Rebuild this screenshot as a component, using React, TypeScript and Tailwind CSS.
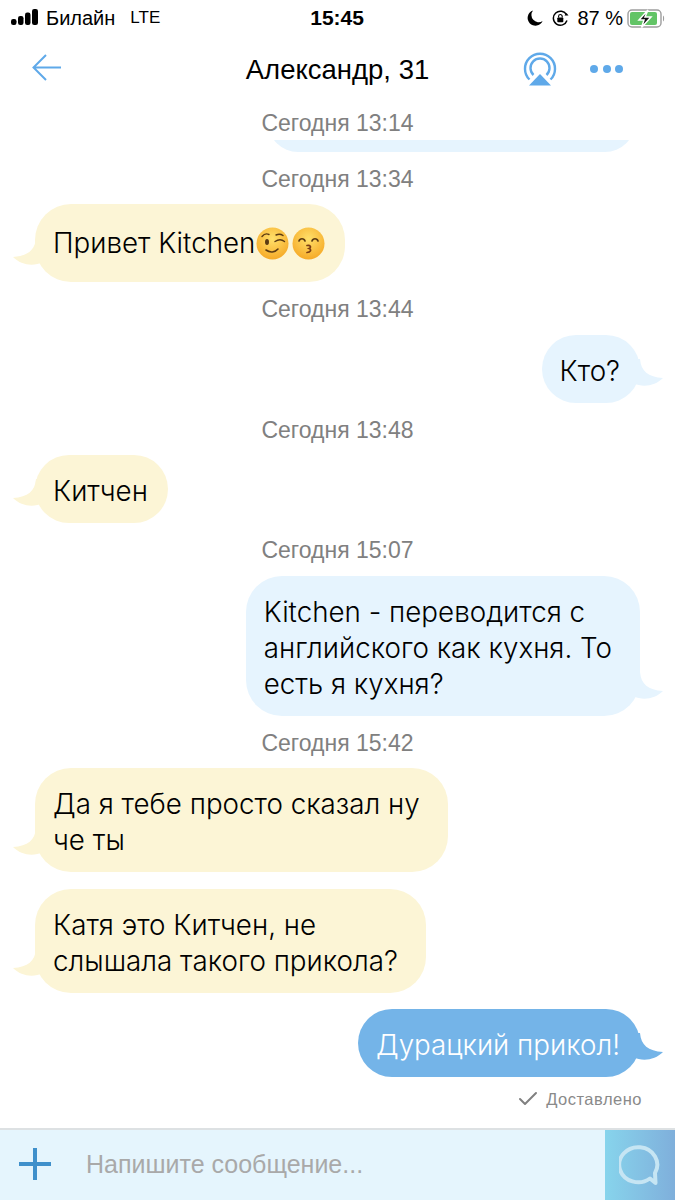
import type { ReactNode } from "react";
import { Check } from "lucide-react";

const stack = "font-['Liberation_Sans',Arial,sans-serif]";

function StatusBar() {
  return (
    <div className="flex h-[36px] items-center pl-[11px] pr-[9px] text-[20px] text-black">
      <svg width="28" height="18" viewBox="0 0 28 18" className="mt-[-2px]">
        <rect x="0" y="11" width="5.5" height="6" rx="2.2" fill="#000" />
        <rect x="7" y="8" width="5.5" height="9" rx="2.2" fill="#000" />
        <rect x="14" y="4.5" width="5.5" height="12.5" rx="2.2" fill="#000" />
        <rect x="21" y="1" width="6" height="16" rx="2.2" fill="#000" />
      </svg>
      <span className="ml-[7px]">Билайн</span>
      <span className="ml-[15px] text-[17px]">LTE</span>
      <span className="ml-[150px] w-[56px] text-[21px] font-bold">15:45</span>
      <div className="ml-auto flex items-center">
        <svg width="16" height="16" viewBox="0 0 16 16">
          <path d="M6 0.5A7.8 7.8 0 1 0 15.6 11 7.2 7.2 0 0 1 6 0.5Z" fill="#000" />
        </svg>
        <svg width="17" height="17" viewBox="0 0 17 17" className="ml-[9px]" fill="none">
          <path d="M15 10.5A7 7 0 1 1 14.6 5" stroke="#000" strokeWidth="1.5" />
          <path d="M12.5 5.5h4l-2-2.6Z" fill="#000" />
          <rect x="5.3" y="7.5" width="6" height="4.8" rx="0.8" fill="#000" />
          <path d="M6.6 7.5V6.3a1.8 1.8 0 0 1 3.6 0v1.2" stroke="#000" strokeWidth="1.1" />
        </svg>
        <span className="ml-[8px] text-[20px]">87 %</span>
        <svg width="39" height="19" viewBox="0 0 39 19" className="ml-[4px]" fill="none">
          <rect x="1" y="1" width="33" height="17" rx="4" stroke="#9d9d9d" strokeWidth="1.4" />
          <rect x="3" y="3" width="27" height="13" rx="2" fill="#62C466" />
          <path d="M36 6.5c1.5.5 1.5 5.5 0 6Z" fill="#9d9d9d" />
          <path d="M21 1 12 11h5l-2.500 7.500L24 8h-6Z" fill="#111" stroke="#fff" strokeWidth="1.500" />
        </svg>
      </div>
    </div>
  );
}

function NavBar() {
  return (
    <div className="relative flex h-[68px] shrink-0 items-center justify-center">
      <svg width="30" height="27" viewBox="0 0 30 27" fill="none" className="absolute left-[32px] top-[18px]">
        <path d="M14 1 1.5 13.5 14 26M2 13.5h27" stroke="#5FA9E9" strokeWidth="2" />
      </svg>
      <span className="text-[27.500px] leading-none text-black">Александр, 31</span>
      <svg width="34" height="34" viewBox="0 0 34 34" fill="none" className="absolute left-[523px] top-[16px]">
        <path d="M6.5 27.5a15 15 0 1 1 21 0" stroke="#5FA9E9" strokeWidth="2.4" />
        <path d="M10.5 23a9.5 9.5 0 1 1 13 0" stroke="#5FA9E9" strokeWidth="2.4" />
        <path d="M17 22 28 33.5H6Z" fill="#5FA9E9" />
      </svg>
      <div className="absolute left-[590px] top-[29px] flex gap-[4.5px]">
        <span className="h-[8px] w-[8px] rounded-full bg-[#5FA9E9]" />
        <span className="h-[8px] w-[8px] rounded-full bg-[#5FA9E9]" />
        <span className="h-[8px] w-[8px] rounded-full bg-[#5FA9E9]" />
      </div>
    </div>
  );
}

function Stamp({ children, className }: { children: ReactNode; className?: string }) {
  return (
    <div className={`h-[24px] text-center text-[23px] leading-[24px] text-[#808080] ${className ?? "mb-[14px] mt-[15px]"}`}>
      {children}
    </div>
  );
}

function Tail({ side, color }: { side: "left" | "right"; color: string }) {
  if (side === "left") {
    return (
      <svg width="30" height="30" viewBox="0 0 30 30" className="absolute bottom-[14px] left-[-22px]">
        <path d="M23 0C22 12 15 18 0 19 8 27 20 29 30 24L30 0Z" fill={color} />
      </svg>
    );
  }
  return (
    <svg width="30" height="30" viewBox="0 0 30 30" className="absolute bottom-[14px] right-[-23px]">
      <path d="M7 0C8 12 15 18 30 19 22 27 10 29 0 24L0 0Z" fill={color} />
    </svg>
  );
}

function Bubble({
  side,
  dark,
  wrapped,
  children,
}: {
  side: "left" | "right";
  dark?: boolean;
  wrapped?: boolean; // wrapped messages keep a wider gap on the right
  children: ReactNode;
}) {
  const left = side === "left";
  const color = left ? "#FCF5D6" : dark ? "#74B4E8" : "#E6F4FE";
  return (
    <div className={`flex ${left ? "justify-start pl-[35px]" : "justify-end pr-[35px]"}`}>
      <div
        className={`relative rounded-[36px] pb-[14px] pl-[18px] pt-[18px] font-['Inter',sans-serif] text-[27.750px] font-light leading-[36px] ${
          wrapped ? "pr-[28px]" : "pr-[20px]"
        } ${left ? "bg-[#FCF5D6] text-black" : dark ? "bg-[#74B4E8] text-white" : "bg-[#E6F4FE] text-black"}`}
      >
        <Tail side={side} color={color} />
        <span className="relative">{children}</span>
      </div>
    </div>
  );
}

function WinkEmoji() {
  return (
    <svg width="33" height="33" viewBox="0 0 33 33" fill="none">
      <defs>
        <radialGradient id="wink" cx="50%" cy="35%" r="70%">
          <stop offset="0%" stopColor="#FFE06A" />
          <stop offset="100%" stopColor="#F5A623" />
        </radialGradient>
      </defs>
      <circle cx="16.5" cy="16.5" r="16" fill="url(#wink)" />
      <ellipse cx="11" cy="15" rx="2" ry="3" fill="#5b3a12" />
      <path d="M6 9.5c2-2.4 5-3 7-2M19 14.5c3-2 7-2 9.5 0M20 8c2.500-1.200 5-1 7 .5" stroke="#5b3a12" strokeWidth="1.4" strokeLinecap="round" />
      <path d="M10 23c4 3 9 2.500 12-1" stroke="#5b3a12" strokeWidth="1.6" strokeLinecap="round" />
    </svg>
  );
}

function KissEmoji() {
  return (
    <svg width="33" height="33" viewBox="0 0 33 33" fill="none">
      <defs>
        <radialGradient id="kiss" cx="50%" cy="35%" r="70%">
          <stop offset="0%" stopColor="#FFE06A" />
          <stop offset="100%" stopColor="#F5A623" />
        </radialGradient>
      </defs>
      <circle cx="16.5" cy="16.5" r="16" fill="url(#kiss)" />
      <path d="M7 14c1-3 5-3 6 0M20 14c1-3 5-3 6 0" stroke="#5b3a12" strokeWidth="1.7" strokeLinecap="round" />
      <path d="M15 18.500c3-.8 5 1.500 2 3 3 1 1.500 4-2 4" stroke="#7a3d14" strokeWidth="1.7" strokeLinecap="round" />
    </svg>
  );
}

function InputBar() {
  return (
    <div className="flex h-[72px] shrink-0 items-stretch border-t-2 border-[#DDE1E3] bg-[#E5F5FD]">
      <svg width="32" height="32" viewBox="0 0 32 32" className="ml-[19px] mt-[18px]">
        <path d="M16 0v32M0 16h32" stroke="#3F90CB" strokeWidth="4" />
      </svg>
      <span className="ml-[35px] flex-1 pt-[18px] text-[25px] leading-[32px] text-[#A9A9A9]">Напишите сообщение...</span>
      <div className="flex w-[70px] items-start justify-center bg-gradient-to-r from-[#87D4EC] to-[#7FAFDB] pt-[13px]">
        <svg width="42" height="42" viewBox="0 0 42 42" fill="none">
          <path
            d="M31 35.500A19 17.500 0 1 1 36 30L36.500 40Z"
            stroke="#C6E5F3"
            strokeWidth="4"
            strokeLinejoin="round"
          />
        </svg>
      </div>
    </div>
  );
}

export default function App() {
  return (
    <div className={`flex h-[1200px] w-[675px] flex-col overflow-hidden bg-white ${stack}`}>
      <StatusBar />
      <NavBar />
      <div className="flex-1 overflow-hidden">
        <Stamp className="mt-[7px] mb-[5px]">Сегодня 13:14</Stamp>
        <div className="flex h-[12px] items-end justify-end overflow-hidden pr-[40px]">
          <div className="h-[60px] w-[367px] rounded-[36px] bg-[#E6F4FE]" />
        </div>

        <Stamp className="mb-[13px] mt-[15px]">Сегодня 13:34</Stamp>
        <Bubble side="left">
          <span className="flex h-[46px] translate-y-[-2px] items-center">
            Привет Kitchen
            <span className="ml-[1px] flex gap-[3px]">
              <WinkEmoji />
              <KissEmoji />
            </span>
          </span>
        </Bubble>

        <Stamp>Сегодня 13:44</Stamp>
        <Bubble side="right">Кто?</Bubble>

        <Stamp className="mb-[13px] mt-[15px]">Сегодня 13:48</Stamp>
        <Bubble side="left">Китчен</Bubble>

        <Stamp>Сегодня 15:07</Stamp>
        <Bubble side="right" wrapped>
          Kitchen - переводится с
          <br />
          английского как кухня. То
          <br />
          есть я кухня?
        </Bubble>

        <Stamp className="mb-[13px] mt-[15px]">Сегодня 15:42</Stamp>
        <Bubble side="left" wrapped>
          Да я тебе просто сказал ну
          <br />
          че ты
        </Bubble>
        <div className="h-[17px]" />
        <Bubble side="left" wrapped>
          Катя это Китчен, не
          <br />
          слышала такого прикола?
        </Bubble>
        <div className="h-[16px]" />
        <Bubble side="right" dark>
          Дурацкий прикол!
        </Bubble>

        <div className="mt-[10px] flex items-center justify-end pr-[33px] text-[16.500px] leading-[20px] tracking-[0.5px] text-[#8A8A8A]">
          <Check size={24} strokeWidth={2} className="mr-[6px] text-[#808080]" />
          Доставлено
        </div>
      </div>
      <InputBar />
    </div>
  );
}
